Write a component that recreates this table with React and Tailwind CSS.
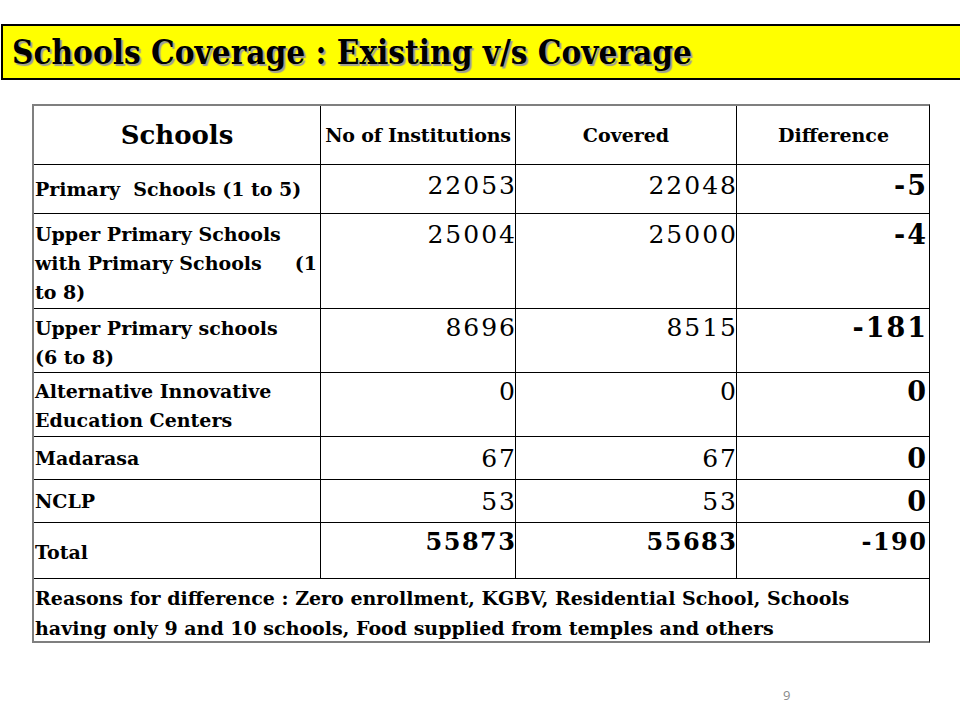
import React from "react";

const serif = { fontFamily: '"DejaVu Serif", "Liberation Serif", serif' };
const titleFont = { fontFamily: '"DejaVu Serif Condensed", "DejaVu Serif", serif' };

const rows = [
  { name: ["Primary  Schools (1 to 5)"], a: "22053", b: "22048", d: "-5", h: "h-[49px]", pl: "pt-[10px]", pn: "pt-[6px]" },
  { name: ["Upper Primary Schools", "with Primary Schools     (1", "to 8)"], a: "25004", b: "25000", d: "-4", h: "h-[95px]", pl: "pt-[6px]", pn: "pt-[6px]" },
  { name: ["Upper Primary schools", "(6 to 8)"], a: "8696", b: "8515", d: "-181", h: "h-[64px]", pl: "pt-[5px]", pn: "pt-[4px]" },
  { name: ["Alternative Innovative", "Education Centers"], a: "0", b: "0", d: "0", h: "h-[64px]", pl: "pt-[4px]", pn: "pt-[4px]" },
  { name: ["Madarasa"], a: "67", b: "67", d: "0", h: "h-[43px]", pl: "pt-[7px]", pn: "pt-[7px]" },
  { name: ["NCLP"], a: "53", b: "53", d: "0", h: "h-[43px]", pl: "pt-[7px]", pn: "pt-[7px]" },
];

export default function App() {
  return (
    <div className="w-[960px] h-[720px] bg-white relative overflow-hidden" style={serif}>
      {/* title bar */}
      <div className="mt-[24px] ml-[1px] h-[56px] border-2 border-r-0 border-black bg-[#ffff00] flex items-center pl-[9px]">
        <h1
          className="text-[33px] font-bold text-black leading-none [text-shadow:2px_2px_1px_#9a9a9a]"
          style={titleFont}
        >
          Schools Coverage : Existing v/s Coverage
        </h1>
      </div>

      {/* table */}
      <div className="ml-[32px] mt-[24px] w-[898px] border-t-2 border-l-2 border-b-2 border-r border-t-[#7f7f7f] border-l-[#7f7f7f] border-b-[#7f7f7f] border-r-black">
        <div className="grid grid-cols-[287px_195px_221px_193px] h-[59px] border-b border-black items-stretch">
          <div className="border-r border-black flex items-center justify-center text-[26px] font-bold">Schools</div>
          <div className="border-r border-black flex items-center justify-center text-[19px] font-bold tracking-[-0.2px] whitespace-nowrap">No of Institutions</div>
          <div className="border-r border-black flex items-center justify-center text-[19px] font-bold">Covered</div>
          <div className="flex items-center justify-center text-[19px] font-bold">Difference</div>
        </div>

        {rows.map((r, i) => (
          <div key={i} className={`grid grid-cols-[287px_195px_221px_193px] border-b border-black ${r.h}`}>
            <div className={`border-r border-black pl-[1px] text-[19px] font-bold leading-[29px] whitespace-pre ${r.pl}`}>
              {r.name.map((l, j) => (
                <div key={j}>{l}</div>
              ))}
            </div>
            <div className={`border-r border-black text-right text-[25px] leading-[29px] ${r.pn}`}>
              <span className="mr-[-2px] tracking-[2px]">{r.a}</span>
            </div>
            <div className={`border-r border-black text-right text-[25px] leading-[29px] ${r.pn}`}>
              <span className="mr-[-2px] tracking-[2px]">{r.b}</span>
            </div>
            <div className={`text-right pr-[4px] text-[27px] font-bold leading-[29px] ${r.pn}`}>
              <span className="mr-[-2px] tracking-[2px]">{r.d}</span>
            </div>
          </div>
        ))}

        <div className="grid grid-cols-[287px_195px_221px_193px] border-b border-black h-[56px]">
          <div className="border-r border-black pl-[1px] pt-[15px] text-[19px] font-bold leading-[29px]">Total</div>
          <div className="border-r border-black text-right pt-[4px] text-[24px] font-bold leading-[29px]">
            <span className="mr-[-1.5px] tracking-[1.5px]">55873</span>
          </div>
          <div className="border-r border-black text-right pt-[4px] text-[24px] font-bold leading-[29px]">
            <span className="mr-[-1.5px] tracking-[1.5px]">55683</span>
          </div>
          <div className="text-right pr-[4px] pt-[4px] text-[24px] font-bold leading-[29px]">
            <span className="mr-[-1.5px] tracking-[1.5px]">-190</span>
          </div>
        </div>

        <div className="h-[62px] pl-[1px] pt-[4px] text-[19px] font-bold leading-[30px] whitespace-nowrap">
          <div>Reasons for difference : Zero enrollment, KGBV, Residential School, Schools</div>
          <div>having only 9 and 10 schools, Food supplied from temples and others</div>
        </div>
      </div>

      <div
        className="absolute left-[783px] top-[686px] text-[13px] text-[#8a8a8a]"
        style={{ fontFamily: '"Open Sans", "Liberation Sans", sans-serif' }}
      >
        9
      </div>
    </div>
  );
}
